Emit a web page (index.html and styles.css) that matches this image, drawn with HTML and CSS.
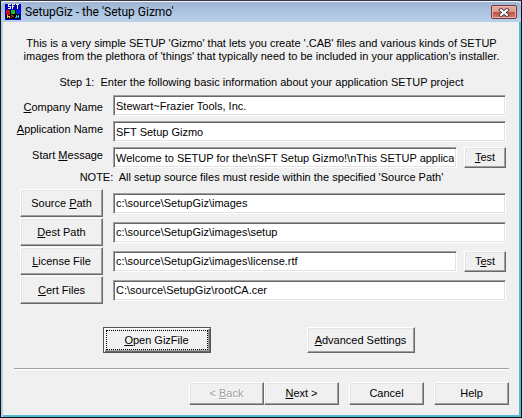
FILE: index.html
```
<!DOCTYPE html>
<html lang="en">
<head>
<meta charset="utf-8">
<title>SetupGiz - the 'Setup Gizmo'</title>
<link rel="stylesheet" href="styles.css">
</head>
<body>
<main class="window">
  <header class="titlebar">
    <svg class="app-icon" viewBox="0 0 16 16" shape-rendering="crispEdges" aria-hidden="true">
      <path fill="#0000c8" d="M0 0h16v16H0z"/>
      <path fill="#f4f0b8" d="M3 0h3v1H3zM3 1h1v1H3zM3 2h3v1H3zM5 3h1v1H5zM3 4h3v1H3zM7 0h3v1H7zM7 1h1v4H7zM8 2h1v1H8zM11 0h3v1h-3zM12 1h1v4h-1z"/>
      <path fill="#000" d="M1 6h14v9H1z"/>
      <path fill="#c01020" d="M1 6h4v5H1z"/>
      <path fill="#10c030" d="M6 6h4v4H6z"/>
      <path fill="#1020e0" d="M11 6h4v4h-4z"/>
      <path fill="#f0d030" d="M2 11h1v3H2zM3 12h2v1H3zM4 13h1v1H4z"/>
      <path fill="#e02020" d="M6 11h2v1H6zM7 12h2v1H7zM6 13h1v1H6z"/>
      <path fill="#20c8e0" d="M11 11h1v2h-1zM13 11h1v3h-1zM10 13h2v1h-2zM12 12h1v1h-1z"/>
    </svg>
    <h1 class="title">SetupGiz - the 'Setup Gizmo'</h1>
    <button class="close" type="button" aria-label="Close">
      <svg class="close-icon" viewBox="0 0 12 9" aria-hidden="true">
        <path d="M3 2l6 5M9 2l-6 5" stroke="#54434a" stroke-width="4" stroke-linecap="square"/>
        <path d="M3 2l6 5M9 2l-6 5" stroke="#fff" stroke-width="2" stroke-linecap="square"/>
      </svg>
    </button>
  </header>
  <form class="client">
    <p class="intro">This is a very simple SETUP 'Gizmo' that lets you create '.CAB' files and various kinds of SETUP<br>images from the plethora of 'things' that typically need to be included in your application's installer.</p>
    <p class="step">Step 1:&nbsp; Enter the following basic information about your application SETUP project</p>
    <div class="fields">
      <div class="row">
        <label class="label label-low" for="company"><u>C</u>ompany Name</label>
        <input class="box" id="company" type="text" value="Stewart~Frazier Tools, Inc.">
      </div>
      <div class="row">
        <label class="label" for="application"><u>A</u>pplication Name</label>
        <input class="box" id="application" type="text" value="SFT Setup Gizmo">
      </div>
      <div class="row">
        <label class="label" for="message">Start <u>M</u>essage</label>
        <input class="box" id="message" type="text" value="Welcome to SETUP for the\nSFT Setup Gizmo!\nThis SETUP application">
        <button class="btn test" type="button"><u>T</u>est</button>
      </div>
    </div>
    <p class="note">NOTE:&nbsp; All setup source files must reside within the specified 'Source Path'</p>
    <div class="paths">
      <div class="row path">
        <button class="btn browse" id="source-button" type="button">Source <u>P</u>ath</button>
        <input class="box" type="text" aria-labelledby="source-button" value="c:\source\SetupGiz\images">
      </div>
      <div class="row path">
        <button class="btn browse" id="dest-button" type="button"><u>D</u>est Path</button>
        <input class="box" type="text" aria-labelledby="dest-button" value="c:\source\SetupGiz\images\setup">
      </div>
      <div class="row path">
        <button class="btn browse" id="license-button" type="button"><u>L</u>icense File</button>
        <input class="box" type="text" aria-labelledby="license-button" value="c:\source\SetupGiz\images\license.rtf">
        <button class="btn test" type="button">T<u>e</u>st</button>
      </div>
      <div class="row path">
        <button class="btn browse" id="cert-button" type="button"><u>C</u>ert Files</button>
        <input class="box" type="text" aria-labelledby="cert-button" value="C:\source\SetupGiz\rootCA.cer">
      </div>
    </div>
    <div class="actions">
      <button class="btn action default" type="button"><span class="focus"><u>O</u>pen GizFile</span></button>
      <button class="btn action" type="button"><u>A</u>dvanced Settings</button>
    </div>
    <footer class="wizard">
      <div class="pager">
        <button class="btn nav" type="button" disabled>&lt; <u>B</u>ack</button>
        <button class="btn nav" type="button"><u>N</u>ext &gt;</button>
      </div>
      <button class="btn nav" type="button">Cancel</button>
      <button class="btn nav" type="button">Help</button>
    </footer>
  </form>
</main>
</body>
</html>
```
FILE: styles.css
```
* { box-sizing: border-box; }

body {
  margin: 0;
  background: #0c1418;
  color: #000;
  font: 11px/13px "Liberation Sans", Arial, sans-serif;
}

p, h1 { margin: 0; }

u { text-underline-offset: 1px; text-decoration-thickness: 1px; text-decoration-skip-ink: none; }

.window {
  display: flex;
  flex-direction: column;
  min-height: 100vh;
  padding: 0 1px 1px;
  background: linear-gradient(#b9cde5, #b9cde5) content-box, #0c1418;
  border-top: 1px solid #33343c;
}

.titlebar {
  display: flex;
  align-items: center;
  height: 21px;
  padding: 0 4px;
  border-top: 1px solid #f4f7fb;
  border-radius: 5px 5px 0 0;
  background: linear-gradient(#9db5d3, #b9d1ea);
}

.app-icon { width: 16px; height: 16px; }

.title {
  flex: 1;
  margin-left: 4px;
  font: 12px/18px Roboto, "Open Sans", sans-serif;
}

.close {
  display: grid;
  place-items: center;
  width: 26px;
  height: 14px;
  padding: 0;
  border: 1px solid #743a3c;
  border-radius: 2px;
  background: linear-gradient(#e0a49a 45%, #c2503f 50%, #d5806e);
  box-shadow: inset 0 0 0 1px #e6b3aa;
}

.close-icon { width: 12px; height: 9px; }

.client {
  display: flex;
  flex: 1;
  flex-direction: column;
  margin: 0 2px 2px;
  padding: 15px 10px 10px 11px;
  background: #f0f0f0;
  box-shadow: 1px 1px 0 1px #55b9cf, -1px 0 #b9cde5;
}

.intro, .step, .note { text-align: center; white-space: nowrap; }

.step { margin-top: 13px; }

.fields {
  display: grid;
  gap: 5px;
  margin: 6px 3px 0 1px;
}

.row { display: flex; }

.label {
  flex: none;
  width: 88px;
  margin-right: 10px;
  line-height: 17px;
  text-align: right;
  white-space: nowrap;
}

.label-low { align-self: flex-end; }

.box {
  flex: 1;
  min-width: 0;
  height: 21px;
  padding: 0 2px;
  border: 1px solid;
  border-color: #a0a0a0 #fff #fff #a0a0a0;
  background: #fff;
  box-shadow: inset 1px 1px #696969, inset -1px -1px #e3e3e3;
  color: #000;
  font: inherit;
}

.btn {
  padding: 0;
  border: 1px solid;
  border-color: #fff #696969 #696969 #fff;
  border-radius: 0;
  background: #f0f0f0;
  box-shadow: inset -1px -1px #a0a0a0, inset 1px 1px #e3e3e3;
  color: #000;
  font: inherit;
}

.btn:disabled { color: #a0a0a0; text-shadow: 1px 1px #fff; }

.test { width: 42px; height: 21px; margin-left: 7px; }

.note { margin-top: 3px; }

.paths {
  display: grid;
  gap: 1px;
  margin: 5px 3px 0 6px;
}

.path { align-items: center; }

.browse { width: 83px; height: 28px; margin-right: 10px; }

.actions {
  display: flex;
  justify-content: center;
  gap: 96px;
  margin-top: 23px;
  padding-right: 6px;
}

.action { width: 108px; height: 26px; }

.default {
  padding: 2px;
  border-color: #555;
  box-shadow: inset 1px 1px #fff, inset -1px -1px #696969, inset -2px -2px #a0a0a0;
}

.focus {
  display: grid;
  grid-auto-flow: column;
  place-content: center;
  height: 100%;
  border: 1px dotted #000;
  white-space: pre;
}

.wizard {
  display: flex;
  justify-content: flex-end;
  gap: 10px;
  margin-top: 15px;
  padding-top: 13px;
  border-top: 1px solid #a0a0a0;
  box-shadow: inset 0 1px #fff;
}

.pager { display: flex; }

.nav { width: 75px; height: 23px; }
```
